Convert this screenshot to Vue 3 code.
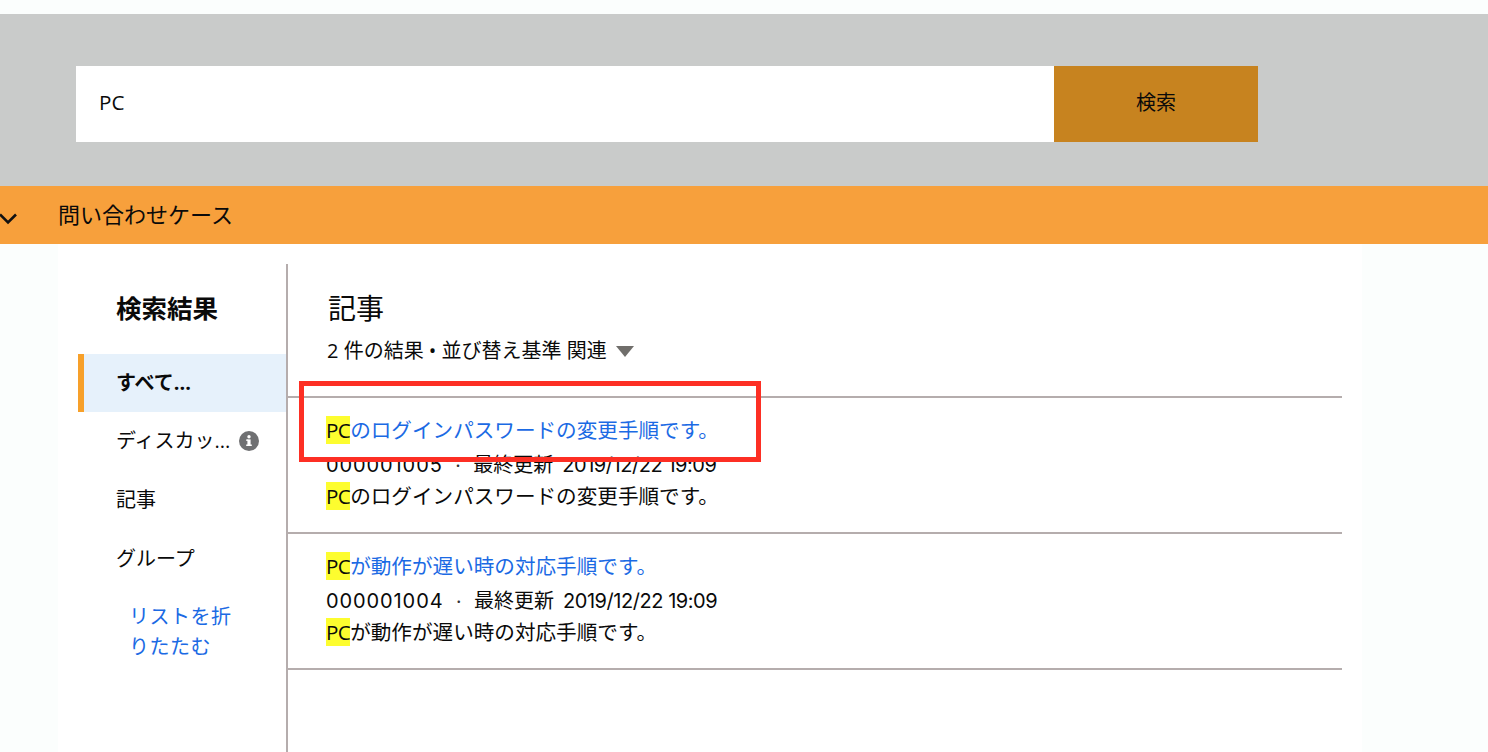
<script setup>
const results = [
  { id: '000001005', title: 'のログインパスワードの変更手順です。' },
  { id: '000001004', title: 'が動作が遅い時の対応手順です。' }
]
</script>

<template>
  <div class="page">
    <div class="search">
      <div class="input">PC</div>
      <div class="btn">検索</div>
    </div>
    <div class="band">
      <svg class="chev" width="18" height="12" viewBox="0 0 18 12"><path d="M0 1.5 L8 9.5 L16 1.5" fill="none" stroke="#111" stroke-width="2.6"/></svg>
      <span>問い合わせケース</span>
    </div>
    <div class="panel">
      <aside class="side">
        <h2>検索結果</h2>
        <div class="item active">すべて...</div>
        <div class="item">ディスカッ...
          <svg class="info" width="20" height="20" viewBox="0 0 20 20"><circle cx="10" cy="10" r="10" fill="#6f7072"/><rect x="8.4" y="8.4" width="3.2" height="6.4" fill="#fff"/><rect x="7.2" y="8.4" width="2" height="1.5" fill="#fff"/><rect x="7.2" y="13.5" width="5.6" height="1.5" fill="#fff"/><circle cx="10" cy="5.8" r="1.7" fill="#fff"/></svg>
        </div>
        <div class="item tall">記事</div>
        <div class="item taller">グループ</div>
        <a class="collapse">リストを折りたたむ</a>
      </aside>
      <main class="main">
        <h1>記事</h1>
        <div class="summary">
          <span>2 件の結果 • 並び替え基準 関連</span>
          <i class="tri"></i>
        </div>
        <div class="list">
          <div v-for="r in results" :key="r.id" class="row">
            <div class="title"><mark>PC</mark>{{ r.title }}</div>
            <div class="meta"><span class="num-id">{{ r.id }}</span><span class="dot">•</span><span>最終更新</span><span class="date">2019/12/22 19:09</span></div>
            <div class="desc"><mark>PC</mark>{{ r.title }}</div>
          </div>
        </div>
      </main>
    </div>
    <div class="redbox"></div>
  </div>
</template>

<style scoped>
.page {
  position: relative;
  height: 752px;
  overflow: hidden;
  padding-top: 14px;
  box-sizing: border-box;
  background: #fbfefd;
  color: #0a0a0a;
  font-family: "Open Sans", "Noto Sans CJK JP", sans-serif;
  font-size: 20px;
}
.search {
  height: 172px;
  box-sizing: border-box;
  padding: 52px 0 0 76px;
  background: #c9cbca;
  display: flex;
  align-items: flex-start;
}
.input {
  width: 978px;
  height: 76px;
  box-sizing: border-box;
  padding-left: 23px;
  background: #fff;
  line-height: 73px;
  font-size: 20.6px;
}
.btn {
  width: 204px;
  height: 76px;
  background: #c7831f;
  line-height: 74px;
  text-align: center;
}
.band {
  height: 58px;
  background: #f7a03c;
  display: flex;
  align-items: center;
  padding: 0 0 4px 58px;
  box-sizing: border-box;
  position: relative;
  font-size: 22px;
}
.chev { position: absolute; left: 0; top: 27px; }
.panel {
  width: 1304px;
  height: 508px;
  margin-left: 58px;
  background: #fff;
  display: flex;
  padding-top: 20px;
  box-sizing: border-box;
}
.side {
  width: 230px;
  flex: none;
  box-sizing: border-box;
  border-right: 2px solid #b5adad;
  padding-left: 20px;
}
.side h2 {
  margin: 26px 0 28px 38px;
  font-size: 25.5px;
  font-weight: 700;
  line-height: 36px;
}
.item {
  height: 58px;
  line-height: 56px;
  padding-left: 38px;
  display: flex;
  align-items: center;
  white-space: nowrap;
}
.tall { height: 59px; }
.taller { height: 60px; }
.active {
  height: 58px;
  padding-left: 32px;
  background: #e6f1fb;
  border-left: 6px solid #f7a02a;
  font-weight: 700;
}
.info { margin-left: 9px; }
.collapse {
  display: block;
  width: 112px;
  margin: 13px 0 0 51px;
  color: #1b6ae4;
  font-size: 20px;
  letter-spacing: 0.5px;
  line-height: 30px;
}
.main {
  flex: 1;
  padding-right: 20px;
}
.main h1 {
  margin: 24px 0 0 40px;
  font-size: 28px;
  font-weight: 400;
  line-height: 40px;
}
.summary {
  margin: 10px 0 0 39px;
  height: 26px;
  line-height: 26px;
  display: flex;
  align-items: center;
}
.tri {
  margin-left: 9px;
  width: 0;
  height: 0;
  border-left: 9px solid transparent;
  border-right: 9px solid transparent;
  border-top: 11px solid #706e6b;
}
.list {
  margin-top: 32px;
  border-top: 2px solid #b5adad;
}
.row {
  height: 136px;
  box-sizing: border-box;
  padding: 16px 0 0 38px;
  border-bottom: 2px solid #b5adad;
  line-height: 33px;
  white-space: nowrap;
  font-size: 20.6px;
}
.title { color: #1b6ae4; height: 33px; }
.meta {
  display: flex;
  font-family: Inter, "Noto Sans CJK JP", sans-serif;
  font-size: 20px;
  height: 33px;
  padding-top: 2px;
  box-sizing: border-box;
}
.num-id { letter-spacing: 0.9px; }
.date { margin-left: 9px; letter-spacing: -0.45px; }
.dot { margin: 0 13px; font-size: 8px; color: #333; }
mark { background: #fdfd2f; color: #0a0a0a; letter-spacing: -0.6px; }
.redbox {
  position: absolute;
  left: 299px;
  top: 381px;
  width: 462px;
  height: 81px;
  box-sizing: border-box;
  border: 5px solid #fd2f24;
}
</style>
